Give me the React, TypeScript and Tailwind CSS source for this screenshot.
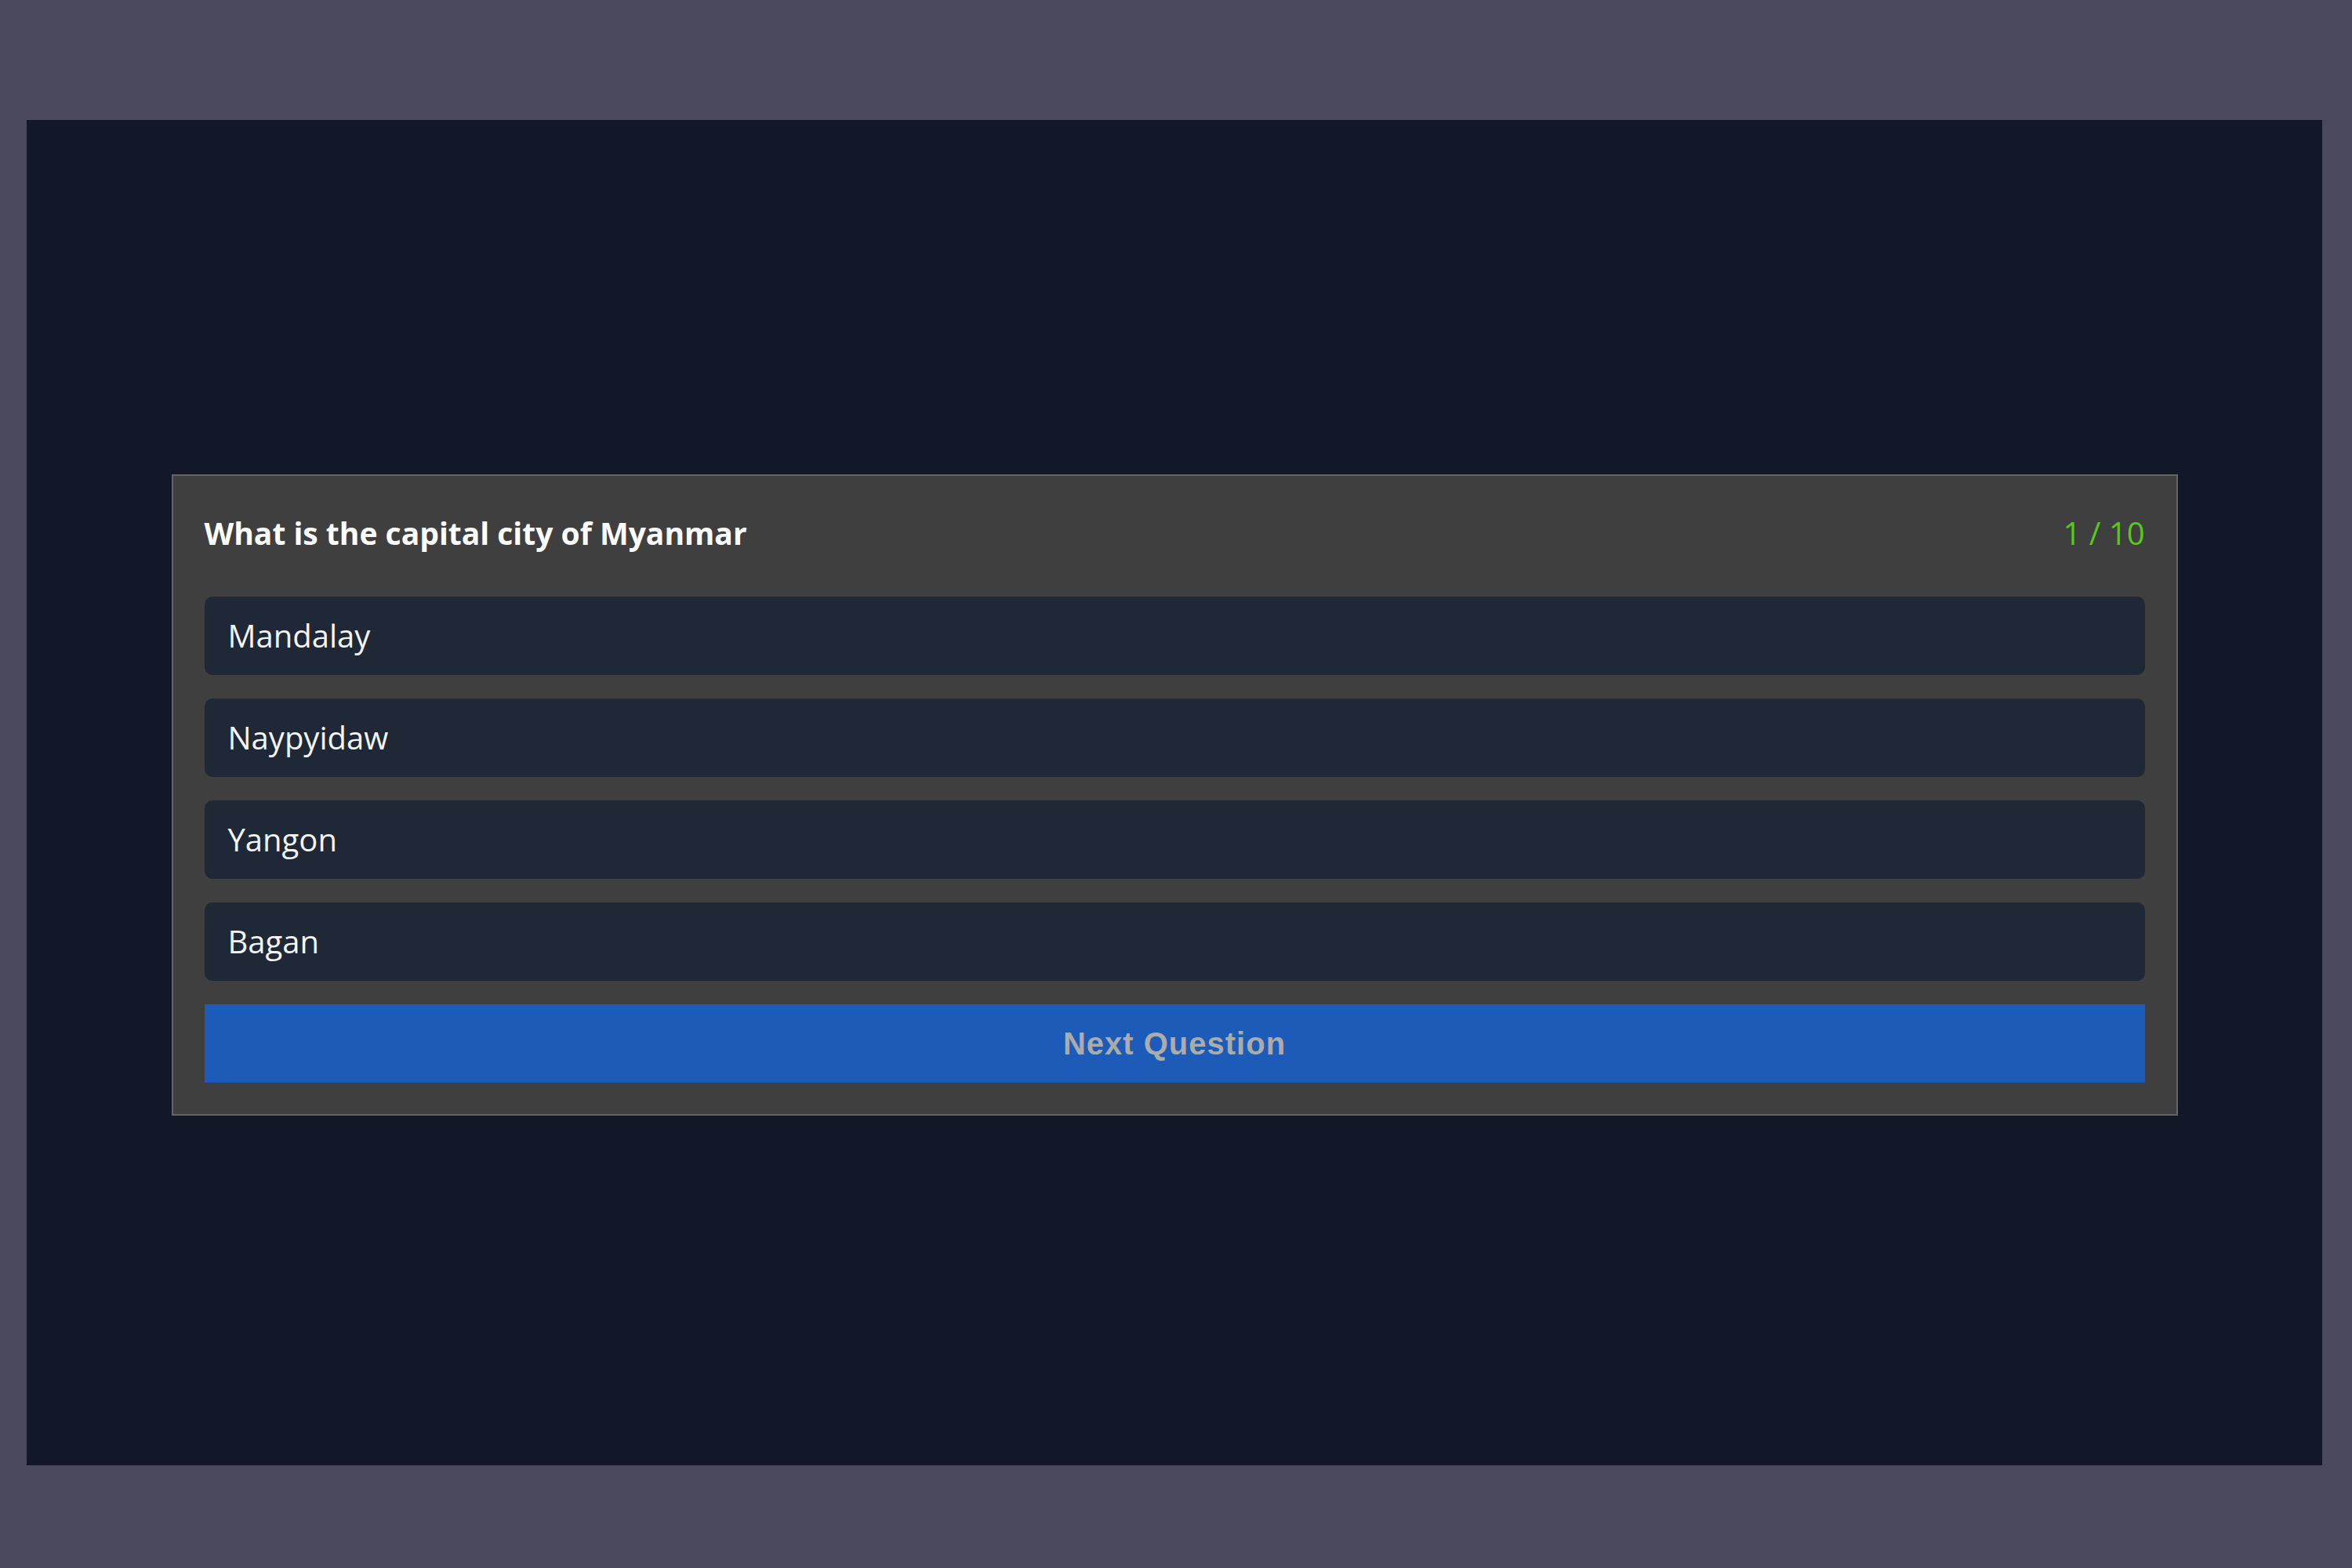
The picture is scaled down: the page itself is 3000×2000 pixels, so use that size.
const options = ['Mandalay', 'Naypyidaw', 'Yangon', 'Bagan'];

export default function App() {
  return (
    <div className="w-[3000px] h-[2000px] bg-[#4b4a5c] pt-[153px] pl-[34px]" style={{ fontFamily: '"Open Sans", "Noto Sans", sans-serif' }}>
      <div className="w-[2928px] h-[1716px] bg-[#121828] flex items-center justify-center pt-[6px]">
        <div className="w-[2559px] bg-[#3f3f3f] border-2 border-[#666666] p-[40px]">
          {/* Header */}
          <div className="flex items-center justify-between mb-[48px] h-[66px]">
            <h2 className="text-[39px] font-bold text-white leading-[66px]">What is the capital city of Myanmar</h2>
            <span className="text-[40px] text-[#58c81a] leading-[66px]">1 / 10</span>
          </div>

          {/* Options */}
          <div className="flex flex-col gap-[30px]">
            {options.map((opt) => (
              <button
                key={opt}
                className="w-full h-[100px] rounded-[10px] bg-[#1f2837] text-left px-[30px] text-[40px] text-[#f5f5f5]"
              >
                {opt}
              </button>
            ))}
            <button
              disabled
              className="w-full h-[100px] bg-[#1c5cb8] text-[40px] font-bold tracking-[1px] text-[#ababab]"
              style={{ fontFamily: '"Liberation Sans", Arial, sans-serif' }}
            >
              Next Question
            </button>
          </div>
        </div>
      </div>
    </div>
  );
}
